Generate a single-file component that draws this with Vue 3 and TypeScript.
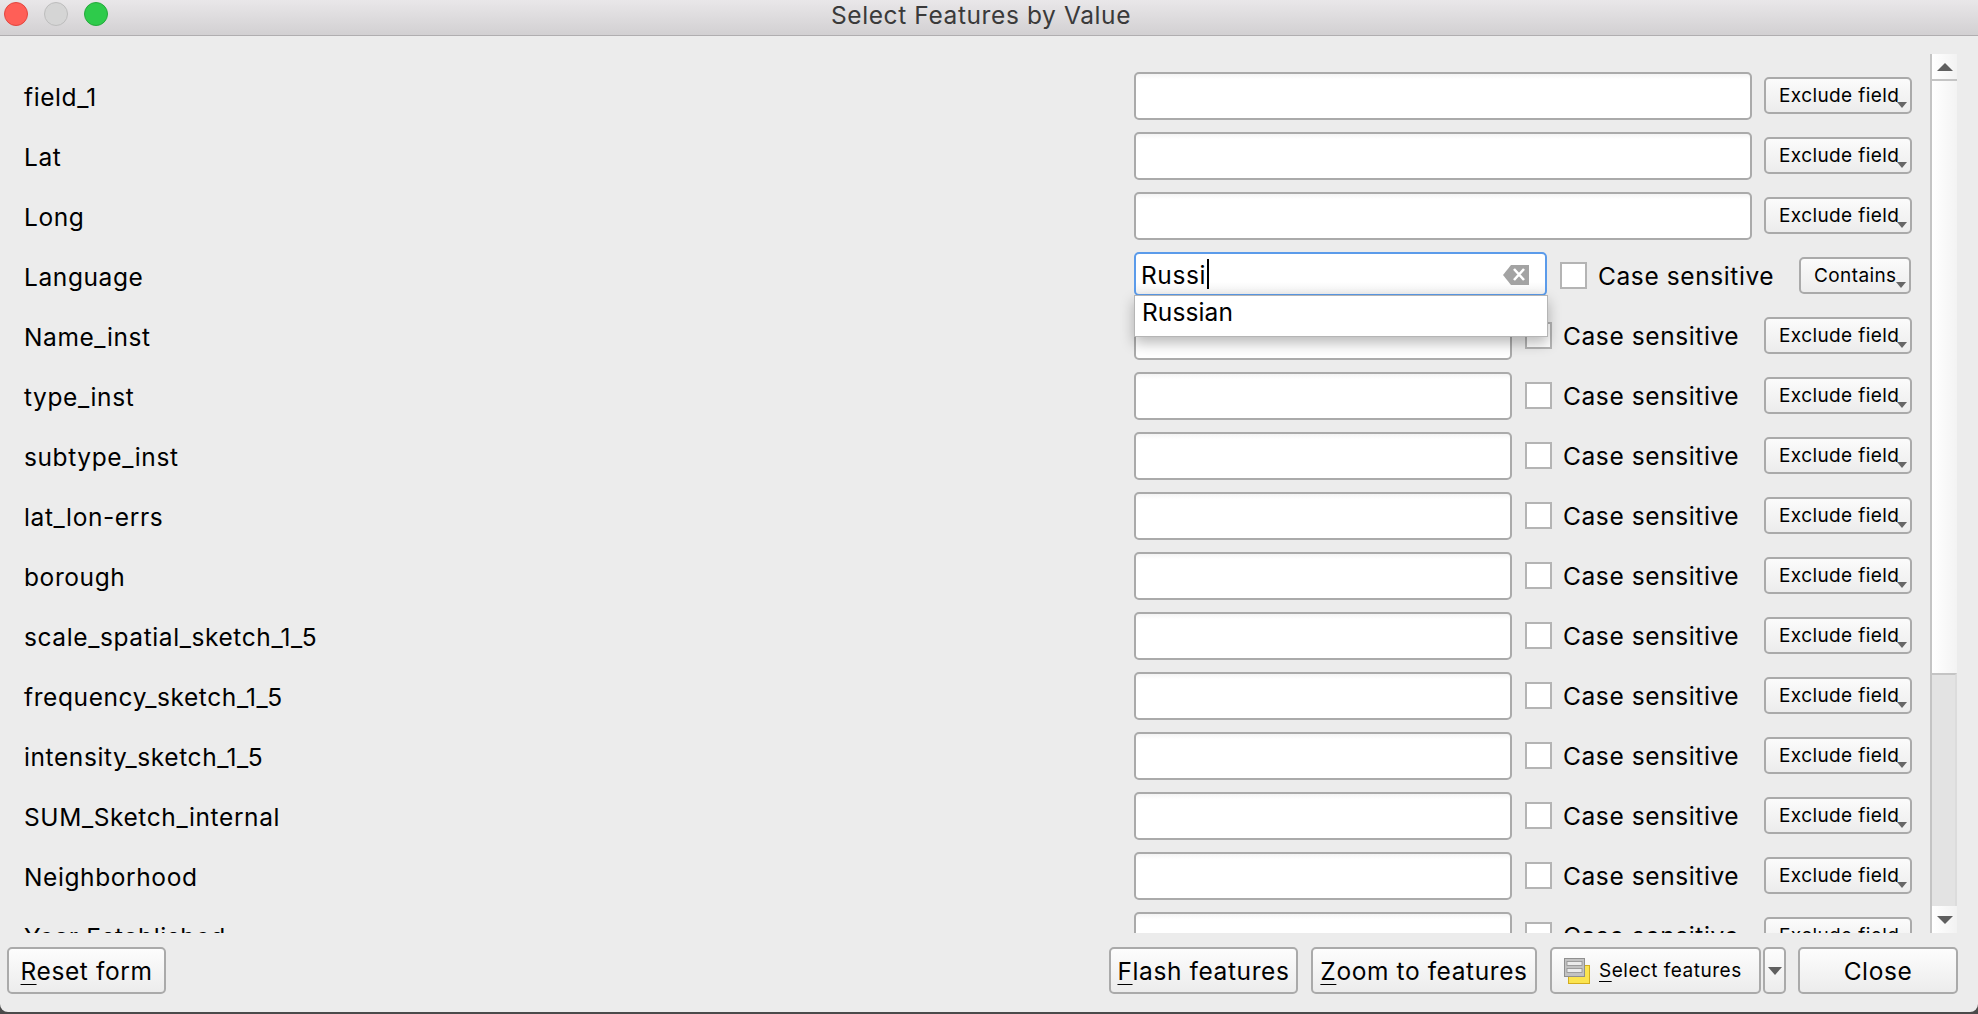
<template>
  <div class="win">
    <header class="titlebar">
      <div class="lights">
        <span class="light light--close"></span>
        <span class="light light--min"></span>
        <span class="light light--max"></span>
      </div>
      <span class="titlebar__text">Select Features by Value</span>
    </header>

    <div class="body">
      <div class="form">
        <div v-for="row in rows" :key="row.name" class="row">
          <span class="row__label">{{ row.name }}</span>
          <div class="row__field">
            <div v-if="row.active" class="input input--active">
              <span class="input__value">Russi</span><span class="caret"></span>
              <svg class="clear" width="26" height="20" viewBox="0 0 26 20">
                <path d="M0 10 L8 0 H26 V20 H8 Z" fill="#a3a3a3" />
                <path d="M11 4 L21 15 M21 4 L11 15" stroke="#fff" stroke-width="2.6" />
              </svg>
              <div class="suggest">Russian</div>
            </div>
            <input v-else class="input" type="text" readonly />
            <template v-if="row.text">
              <span class="check"></span>
              <span class="check-label">Case sensitive</span>
            </template>
            <div class="combo" :class="{ 'combo--short': row.active }">
              {{ row.active ? 'Contains' : 'Exclude field' }}
              <i class="combo__arrow"></i>
            </div>
          </div>
        </div>
      </div>

      <div class="scrollbar">
        <div class="scrollbar__btn"><i class="tri tri--up"></i></div>
        <div class="scrollbar__track"></div>
        <div class="scrollbar__thumb"></div>
        <div class="scrollbar__btn scrollbar__btn--down"><i class="tri tri--down"></i></div>
      </div>
    </div>

    <footer class="footer">
      <button class="btn btn--reset"><u>R</u>eset form</button>
      <span class="footer__gap"></span>
      <button class="btn btn--flash"><u>F</u>lash features</button>
      <button class="btn btn--zoom"><u>Z</u>oom to features</button>
      <button class="btn btn--select">
        <svg width="26" height="26" viewBox="0 0 26 26">
          <rect x="4.5" y="7.5" width="21" height="18" fill="#fbe44f" stroke="#d3ad1f" />
          <rect x="0.5" y="0.5" width="20" height="18" fill="#c2c2c2" stroke="#8f8f8f" />
          <rect x="3" y="3.5" width="15" height="4" fill="#ececec" stroke="#8f8f8f" stroke-width="0.8" />
          <rect x="3" y="10.5" width="15" height="4" fill="#ececec" stroke="#8f8f8f" stroke-width="0.8" />
        </svg>
        <span><u>S</u>elect features</span>
      </button>
      <button class="btn btn--more"><i class="tri tri--down"></i></button>
      <button class="btn btn--close">Close</button>
    </footer>
  </div>
</template>

<script setup lang="ts">
interface FieldRow {
  name: string;
  text: boolean;
  active?: boolean;
}

const rows: FieldRow[] = [
  { name: 'field_1', text: false },
  { name: 'Lat', text: false },
  { name: 'Long', text: false },
  { name: 'Language', text: true, active: true },
  { name: 'Name_inst', text: true },
  { name: 'type_inst', text: true },
  { name: 'subtype_inst', text: true },
  { name: 'lat_lon-errs', text: true },
  { name: 'borough', text: true },
  { name: 'scale_spatial_sketch_1_5', text: true },
  { name: 'frequency_sketch_1_5', text: true },
  { name: 'intensity_sketch_1_5', text: true },
  { name: 'SUM_Sketch_internal', text: true },
  { name: 'Neighborhood', text: true },
  { name: 'Year Established', text: true }
];
</script>

<style>
html,
body {
  background: #4a4a4a;
  overflow: hidden;
}
</style>

<style scoped>
.win {
  width: 1978px;
  height: 1012px;
  display: flex;
  flex-direction: column;
  background: #ececec;
  border-radius: 0 0 8px 8px;
  overflow: hidden;
  font-family: Inter, "Liberation Sans", sans-serif;
  font-size: 24.5px;
  letter-spacing: 0.6px;
  color: #000;
}

.titlebar {
  position: relative;
  flex: none;
  height: 36px;
  box-sizing: border-box;
  padding: 0 16px 6px 0;
  display: flex;
  align-items: center;
  justify-content: center;
  background: linear-gradient(#e9e7e9, #d2d0d2);
  border-bottom: 1px solid #b0aeb0;
}

.titlebar__text {
  color: #3a3a3a;
}

.lights {
  position: absolute;
  left: 4px;
  top: 2px;
  display: flex;
  gap: 16px;
}

.light {
  width: 24px;
  height: 24px;
  border-radius: 50%;
  box-sizing: border-box;
  border: 1px solid;
}

.light--close {
  background: #ff5f57;
  border-color: #e2463f;
}

.light--min {
  background: #d5d5d5;
  border-color: #bdbdbd;
}

.light--max {
  background: #2ecb4b;
  border-color: #25a93c;
}

.body {
  flex: 1;
  min-height: 0;
  display: flex;
}

.form {
  flex: 1;
  min-width: 0;
  overflow: hidden;
  padding: 30px 18px 0 24px;
}

.row {
  display: grid;
  grid-template-columns: 1110px 1fr;
  align-items: center;
  height: 60px;
}

.row__label {
  padding-top: 1px;
  white-space: nowrap;
}

.row__field {
  display: flex;
  align-items: center;
  margin-top: -1px;
}

.input {
  position: relative;
  flex: 1;
  min-width: 0;
  height: 48px;
  box-sizing: border-box;
  padding: 0;
  background: linear-gradient(#f4f4f4, #fff 5px);
  border: 2px solid #aaa;
  border-radius: 5px;
  outline: none;
}

.input--active {
  flex: none;
  width: 413px;
  height: 44px;
  display: flex;
  align-items: center;
  padding-left: 5px;
  background: linear-gradient(#fff 70%, #f1f1f1);
  border-color: #5b9bea;
  margin-top: -3px;
}

.input__value {
  padding-top: 1px;
}

.caret {
  width: 2px;
  height: 30px;
  background: #000;
  margin-left: 1px;
}

.clear {
  position: absolute;
  right: 16px;
  top: 11px;
}

.suggest {
  position: absolute;
  z-index: 2;
  left: -2px;
  top: 41px;
  width: 414px;
  height: 42px;
  box-sizing: border-box;
  padding: 0 7px;
  line-height: 33px;
  letter-spacing: 0.1px;
  background: #fff;
  border: 1px solid #b5b5b5;
  box-shadow: 0 6px 14px rgba(0, 0, 0, 0.28);
}

.check {
  flex: none;
  width: 27px;
  height: 27px;
  box-sizing: border-box;
  margin-left: 13px;
  background: #fff;
  border: 2px solid #b4b4b4;
}

.check-label {
  flex: none;
  width: 175px;
  margin-left: 11px;
  padding-top: 1px;
  white-space: nowrap;
}

.combo {
  position: relative;
  flex: none;
  width: 148px;
  height: 37px;
  box-sizing: border-box;
  margin-left: 12px;
  padding-left: 13px;
  line-height: 34px;
  font-size: 19px;
  letter-spacing: 0.4px;
  white-space: nowrap;
  background: linear-gradient(#fbfbfb, #ececec);
  border: 2px solid #aaa;
  border-radius: 5px;
}

.row__field .check-label + .combo {
  margin-left: 26px;
}

.combo--short {
  width: 112px;
}

.combo__arrow {
  position: absolute;
  right: 3px;
  bottom: 4px;
  width: 0;
  height: 0;
  border-left: 5px solid transparent;
  border-right: 5px solid transparent;
  border-top: 6px solid #666;
}

.scrollbar {
  flex: none;
  width: 27px;
  box-sizing: border-box;
  margin: 18px 21px 0 0;
  display: flex;
  flex-direction: column;
  border-left: 2px solid #c4c4c4;
  background: #f0f0f0;
}

.scrollbar__btn {
  flex: none;
  height: 27px;
  display: flex;
  align-items: center;
  justify-content: center;
  border-bottom: 2px solid #c4c4c4;
  box-sizing: border-box;
  background: linear-gradient(90deg, #fff, #f2f2f2);
}

.scrollbar__btn--down {
  border-bottom: 0;
}

.scrollbar__track {
  flex: 1;
  background: linear-gradient(90deg, #fff, #f3f3f3);
}

.scrollbar__thumb {
  flex: none;
  height: 233px;
  box-sizing: border-box;
  background: #e3e3e3;
  border-top: 2px solid #c4c4c4;
  border-right: 2px solid #dcdcdc;
}

.tri {
  width: 0;
  height: 0;
  border-left: 8px solid transparent;
  border-right: 8px solid transparent;
}

.tri--up {
  border-bottom: 8px solid #5f5f5f;
}

.tri--down {
  border-top: 8px solid #5f5f5f;
}

.footer {
  flex: none;
  height: 79px;
  box-sizing: border-box;
  display: flex;
  gap: 13px;
  padding: 14px 20px 0 7px;
}

.footer__gap {
  flex: 1;
}

.btn {
  height: 47px;
  box-sizing: border-box;
  padding: 0;
  font: inherit;
  letter-spacing: inherit;
  color: inherit;
  white-space: nowrap;
  background: linear-gradient(#fdfdfd, #ececec);
  border: 2px solid #aaa;
  border-radius: 5px;
}

.btn u {
  text-underline-offset: 4px;
  text-decoration-thickness: 1px;
}

.btn--reset {
  width: 159px;
}

.btn--flash {
  width: 189px;
}

.btn--zoom {
  width: 226px;
}

.btn--select {
  width: 211px;
  display: flex;
  align-items: center;
  gap: 9px;
  padding-left: 12px;
  font-size: 19px;
  letter-spacing: 0.5px;
}

.btn--more {
  width: 23px;
  margin-left: -11px;
  display: flex;
  align-items: center;
  justify-content: center;
}

.btn--more .tri {
  border-left-width: 7px;
  border-right-width: 7px;
}

.btn--close {
  width: 160px;
  margin-left: -1px;
}
</style>
